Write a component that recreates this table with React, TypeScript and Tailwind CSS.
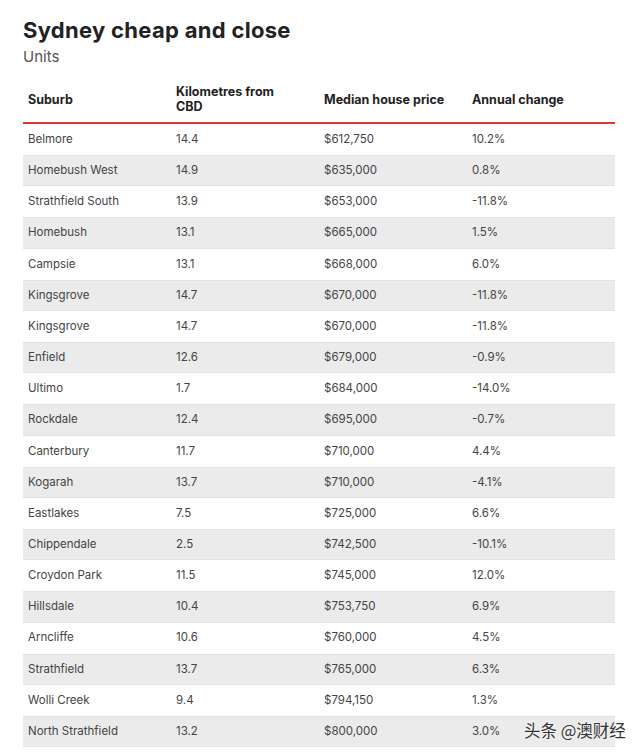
const rows = [
  ["Belmore", "14.4", "$612,750", "10.2%"],
  ["Homebush West", "14.9", "$635,000", "0.8%"],
  ["Strathfield South", "13.9", "$653,000", "-11.8%"],
  ["Homebush", "13.1", "$665,000", "1.5%"],
  ["Campsie", "13.1", "$668,000", "6.0%"],
  ["Kingsgrove", "14.7", "$670,000", "-11.8%"],
  ["Kingsgrove", "14.7", "$670,000", "-11.8%"],
  ["Enfield", "12.6", "$679,000", "-0.9%"],
  ["Ultimo", "1.7", "$684,000", "-14.0%"],
  ["Rockdale", "12.4", "$695,000", "-0.7%"],
  ["Canterbury", "11.7", "$710,000", "4.4%"],
  ["Kogarah", "13.7", "$710,000", "-4.1%"],
  ["Eastlakes", "7.5", "$725,000", "6.6%"],
  ["Chippendale", "2.5", "$742,500", "-10.1%"],
  ["Croydon Park", "11.5", "$745,000", "12.0%"],
  ["Hillsdale", "10.4", "$753,750", "6.9%"],
  ["Arncliffe", "10.6", "$760,000", "4.5%"],
  ["Strathfield", "13.7", "$765,000", "6.3%"],
  ["Wolli Creek", "9.4", "$794,150", "1.3%"],
  ["North Strathfield", "13.2", "$800,000", "3.0%"],
]

export default function App() {
  return (
    <div className="relative w-[640px] h-[754px] overflow-hidden bg-white font-['Inter',sans-serif] text-[#444]">
      <div className="pl-[23px] pr-[25px] pt-[15px]">
        <h1 className="text-[22px] leading-[30px] font-bold text-[#222] tracking-[0.3px]">Sydney cheap and close</h1>
        <p className="text-[15px] leading-[20px] text-[#555] mt-[2px]">Units</p>

        {/* tabla */}
        <div className="mt-[9px]">
          <div className="grid grid-cols-4 h-[48px] border-b-2 border-[#d9382c] text-[12.5px] font-bold text-[#222] leading-[15px]">
            <div className="flex items-center pl-[5px]">Suburb</div>
            <div className="flex items-center pl-[5px] pr-[20px]">Kilometres from CBD</div>
            <div className="flex items-center pl-[5px]">Median house price</div>
            <div className="flex items-center pl-[5px]">Annual change</div>
          </div>
          {rows.map((r, i) => (
            <div
              key={i}
              className={
                i % 2 === 1
                  ? "grid grid-cols-4 h-[31.16px] items-center text-[11.5px] bg-[#ebebeb] border-y border-[#e2e2e2]"
                  : "grid grid-cols-4 h-[31.16px] items-center text-[11.5px] bg-white"
              }
            >
              {r.map((c, j) => (
                <div key={j} className="pl-[5px]">{c}</div>
              ))}
            </div>
          ))}
        </div>
      </div>

      {/* marca de agua */}
      <div className="absolute left-[524px] top-[719px] text-[16.5px] leading-[22px] text-[#333] font-['Noto_Sans_CJK_SC',sans-serif] [text-shadow:0_0_2px_#fff]">
        头条 @澳财经
      </div>
    </div>
  )
}
